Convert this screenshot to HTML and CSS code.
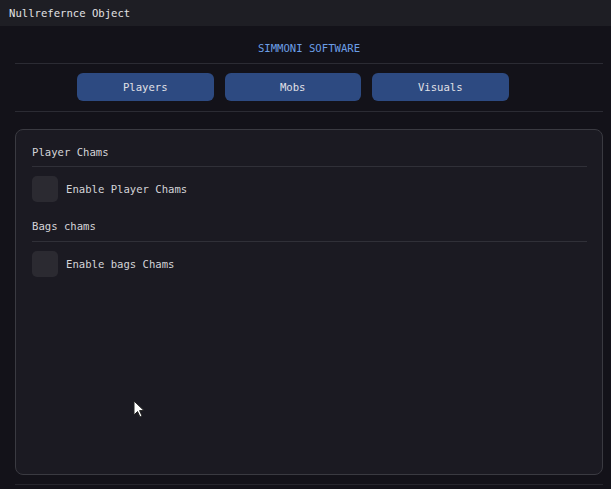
FILE: index.html
```html
<!DOCTYPE html>
<html lang="en">
<head>
  <meta charset="UTF-8">
  <title>Nullrefernce Object</title>
  <link rel="stylesheet" href="styles.css">
</head>
<body>
  <div class="window">
    <div class="titlebar">Nullrefernce Object</div>
    <div class="content">
      <div class="brand">SIMMONI SOFTWARE</div>
      <div class="separator"></div>
      <div class="tabs">
        <button class="tab">Players</button>
        <button class="tab">Mobs</button>
        <button class="tab">Visuals</button>
      </div>
      <div class="separator sep-tabs"></div>
      <div class="child">
        <div class="section-title">Player Chams</div>
        <div class="separator inner"></div>
        <label class="check-row">
          <span class="checkbox"></span>
          <span>Enable Player Chams</span>
        </label>
        <div class="section-title second">Bags chams</div>
        <div class="separator inner lower"></div>
        <label class="check-row">
          <span class="checkbox"></span>
          <span>Enable bags Chams</span>
        </label>
      </div>
      <div class="separator bottom"></div>
    </div>
    <svg class="cursor" width="13" height="19" viewBox="0 0 13 19">
      <path d="M1 1 L1 15 L4.5 11.5 L7 17 L9 16 L6.6 10.6 L11 10.6 Z" fill="#ffffff" stroke="#222" stroke-width="1"/>
    </svg>
  </div>
</body>
</html>
```

FILE: styles.css
```css
body {
  margin: 0;
  padding: 0;
  background-color: #131219;
  color: #d4d4d8;
  font-family: 'DejaVu Sans Mono', monospace;
  font-size: 10.6px;
}

.window {
  position: relative;
  width: 611px;
  height: 489px;
  background-color: #131219;
  overflow: hidden;
}

.titlebar {
  height: 26px;
  line-height: 26px;
  padding-left: 9px;
  background-color: #1e1e24;
  color: #e2e2e4;
}

.content {
  padding: 0 8px 0 15px;
}

.brand {
  margin-top: 15px;
  line-height: 14px;
  text-align: center;
  color: #6b9ee6;
}

.separator {
  height: 1px;
  background-color: #2b2b33;
  margin-top: 8px;
}

.tabs {
  display: flex;
  gap: 11px;
  margin-top: 9px;
  padding-left: 62px;
}

.tab {
  width: 136.5px;
  height: 28px;
  border: none;
  border-radius: 6px;
  background-color: #2d4a81;
  color: #e0e0e6;
  font-family: inherit;
  font-size: inherit;
  cursor: pointer;
}

.sep-tabs {
  margin-top: 10px;
}

.child {
  margin-top: 17px;
  padding: 15px 15px 0 16px;
  box-sizing: border-box;
  height: 346px;
  background-color: #1b1a22;
  border: 1px solid #3a3a41;
  border-radius: 8px;
}

.section-title {
  line-height: 14px;
}

.section-title.second {
  margin-top: 17px;
}

.inner {
  margin-top: 7px;
  background-color: #303038;
}

.inner.lower {
  margin-top: 8px;
}

.check-row {
  display: flex;
  align-items: center;
  gap: 8px;
  margin-top: 9px;
}

.checkbox {
  width: 26px;
  height: 26px;
  border-radius: 5px;
  background-color: #2b2a31;
}

.bottom {
  margin-top: 9px;
  background-color: #26262d;
}

.cursor {
  position: absolute;
  left: 133px;
  top: 400px;
}
```
